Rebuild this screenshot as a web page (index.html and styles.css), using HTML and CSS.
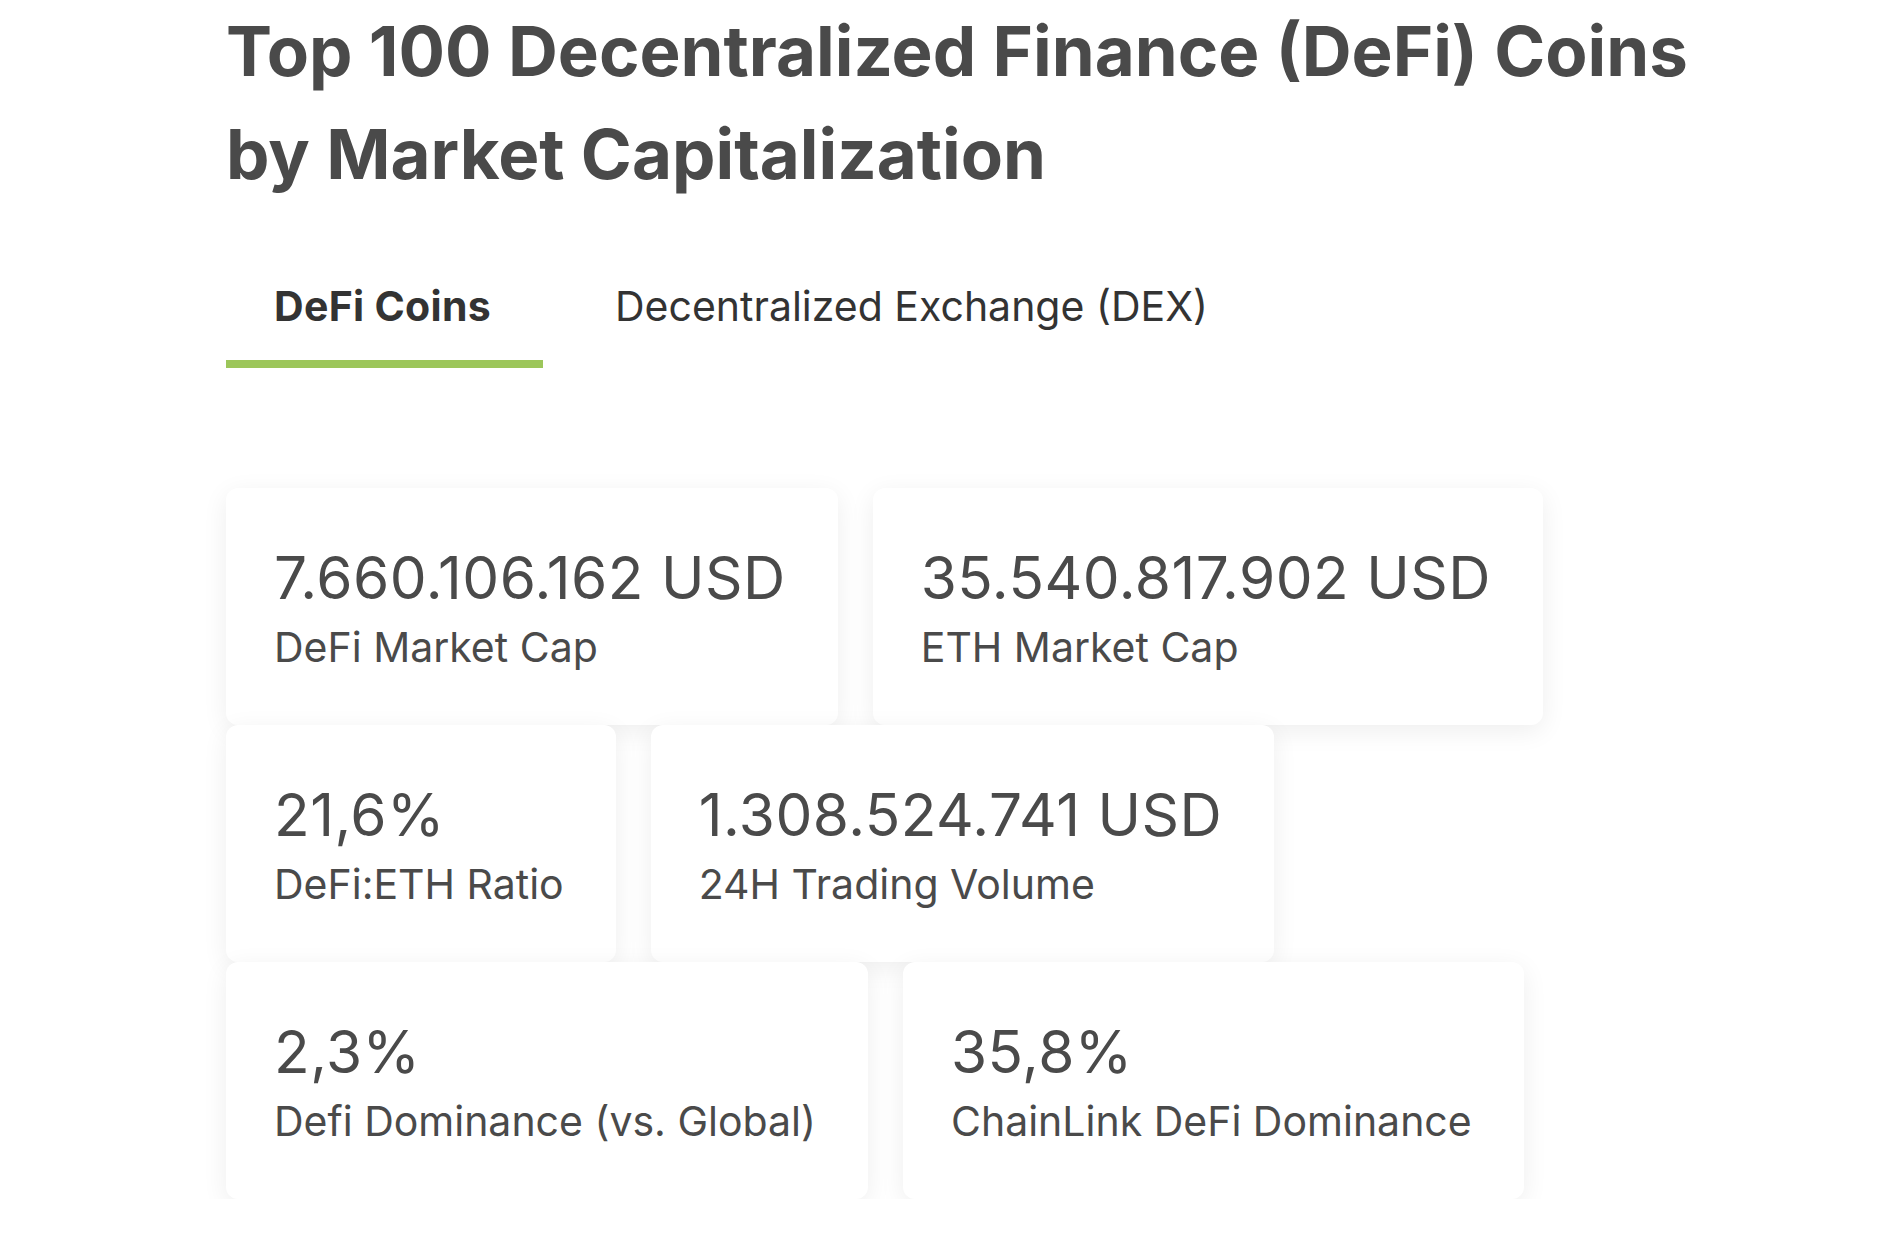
FILE: index.html
```html
<!DOCTYPE html>
<html lang="en">
<head>
<meta charset="utf-8">
<title>Top 100 DeFi Coins</title>
<link rel="stylesheet" href="styles.css">
</head>
<body>
<main class="page">
  <h1 class="title">Top 100 Decentralized Finance (DeFi) Coins by Market Capitalization</h1>
  <nav class="tabs">
    <a class="tab tab-active">DeFi Coins</a>
    <a class="tab">Decentralized Exchange (DEX)</a>
  </nav>
  <section class="stats">
    <div class="card"><div class="value">7.660.106.162 USD</div><div class="label">DeFi Market Cap</div></div>
    <div class="card"><div class="value">35.540.817.902 USD</div><div class="label">ETH Market Cap</div></div>
    <div class="card"><div class="value">21,6%</div><div class="label">DeFi:ETH Ratio</div></div>
    <div class="card"><div class="value">1.308.524.741 USD</div><div class="label">24H Trading Volume</div></div>
    <div class="card"><div class="value">2,3%</div><div class="label">Defi Dominance (vs. Global)</div></div>
    <div class="card"><div class="value">35,8%</div><div class="label">ChainLink DeFi Dominance</div></div>
  </section>
</main>
</body>
</html>
```
FILE: styles.css
```css
html, body {
  margin: 0;
  padding: 0;
  background: #ffffff;
}
body {
  font-family: Inter, "Noto Sans", "Liberation Sans", sans-serif;
  color: #4a4a4a;
}
.page {
  padding: 0 160px 0 226px;
}
.title {
  margin: 0;
  font-size: 69px;
  line-height: 103px;
  font-weight: 700;
  letter-spacing: 0;
  color: #4a4a4a;
}
.tabs {
  display: flex;
  gap: 24px;
  margin-top: 75px;
}
.tab {
  display: block;
  padding: 0 52px 29px 48px;
  font-size: 41px;
  line-height: 50px;
  color: #333333;
  border-bottom: 8px solid transparent;
}
.tab-active {
  font-weight: 700;
  letter-spacing: 0.3px;
  border-bottom-color: #9cc65a;
}
.stats {
  display: flex;
  flex-wrap: wrap;
  column-gap: 35px;
  row-gap: 0;
  margin-top: 120px;
}
.card {
  background: #ffffff;
  border-radius: 12px;
  box-shadow: 0 6px 26px rgba(0, 0, 0, 0.07);
  padding: 55px 52px 53px 48px;
}
.value {
  font-size: 58.5px;
  line-height: 70px;
  letter-spacing: 0.5px;
  color: #4a4a4a;
}
.label {
  margin-top: 9px;
  font-size: 41px;
  line-height: 50px;
  color: #4a4a4a;
}
```
